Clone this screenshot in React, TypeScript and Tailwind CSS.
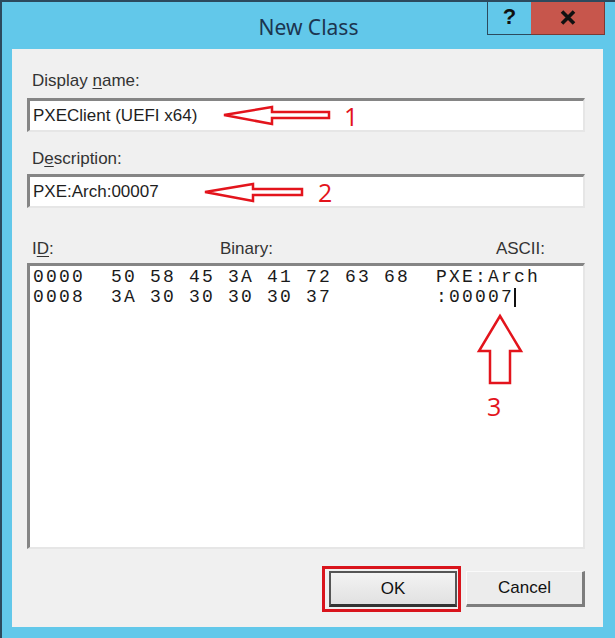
import React from "react";

const ui = { fontFamily: '"Liberation Sans", Arial, sans-serif' };
const caption = { fontFamily: '"Noto Sans", "Open Sans", sans-serif' };
const mono = { fontFamily: '"Liberation Mono", "Courier New", monospace' };
const note = { fontFamily: '"Open Sans", "Noto Sans", sans-serif' };

// underlined access key inside a label
const Key = ({ children }: { children: React.ReactNode }) => (
  <span className="underline underline-offset-2 decoration-1">{children}</span>
);

const Field = ({ value }: { value: string }) => (
  <div className="h-[34px] bg-white border-t-[3px] border-l-[3px] border-r-2 border-b-2 border-t-[#858585] border-l-[#858585] border-r-[#e6e6e6] border-b-[#e6e6e6] flex items-center pl-[3px] text-[17px] text-[#1e1e1e]">
    {value}
  </div>
);

const LeftArrow = ({ x, y, len }: { x: number; y: number; len: number }) => (
  <svg
    className="absolute"
    style={{ left: x, top: y }}
    width={len + 4}
    height={22}
    viewBox={`0 0 ${len + 4} 22`}
  >
    <polygon
      points={`2,10 50,2 50,7 ${len + 2},7 ${len + 2},13 50,13 50,19`}
      fill="none"
      stroke="#e3141c"
      strokeWidth="2.5"
      strokeLinejoin="miter"
    />
  </svg>
);

const rows = [
  "0000  50 58 45 3A 41 72 63 68  PXE:Arch",
  "0008  3A 30 30 30 30 37        :00007",
];

export default function App() {
  return (
    <div className="relative w-[615px] h-[638px] bg-[#62c8ea] border-l-2 border-t-2 border-[#2c4a5e] flex flex-col overflow-hidden">
      {/* caption */}
      <div className="h-[47px] flex items-center justify-center pt-[5px]">
        <span style={caption} className="text-[21px] text-[#1c3550]">
          New Class
        </span>
      </div>
      <div className="absolute top-[-2px] right-[10px] flex h-[35px]">
        <div className="w-[44px] border-l-[1.5px] border-b-[1.5px] border-[#2c4a5e] flex items-center justify-center">
          <span style={ui} className="text-[22px] font-bold text-[#111] leading-none">
            ?
          </span>
        </div>
        <div className="w-[74px] bg-[#c7564c] border-b-[1.5px] border-r-[1.5px] border-[#7a3a34] flex items-center justify-center">
          <svg width="16" height="15" viewBox="0 0 16 15">
            <path d="M2 1.5 L14 13.5 M14 1.5 L2 13.5" stroke="#111" strokeWidth="3.6" />
          </svg>
        </div>
      </div>

      {/* client area */}
      <div
        style={ui}
        className="ml-[10px] mr-[12px] mb-[11px] flex-1 bg-[#f0f0f0] flex flex-col pl-[15px] pr-[18px] pt-[22px] pb-[15px]"
      >
        <div className="pl-[5px] text-[17px] leading-[20px] text-[#333]">
          Display <Key>n</Key>ame:
        </div>
        <div className="mt-[7px]">
          <Field value="PXEClient (UEFI x64)" />
        </div>

        <div className="mt-[17px] pl-[5px] text-[17px] leading-[20px] text-[#333]">
          D<Key>e</Key>scription:
        </div>
        <div className="mt-[5px]">
          <Field value="PXE:Arch:00007" />
        </div>

        <div className="mt-[31px] pl-[5px] pr-[40px] flex text-[17px] leading-[20px] text-[#333]">
          <span className="w-[188px]">
            I<Key>D</Key>:
          </span>
          <span>Binary:</span>
          <span className="ml-auto">ASCII:</span>
        </div>
        <div className="mt-[4px] h-[286px] bg-white border-t-[3px] border-l-[3px] border-r-2 border-b-2 border-t-[#858585] border-l-[#858585] border-r-[#e6e6e6] border-b-[#e6e6e6] pl-[3px] pt-[1px]">
          {rows.map((r, i) => (
            <div
              key={r}
              style={mono}
              className="whitespace-pre text-[18px] tracking-[2.2px] leading-[20px] font-medium text-[#1a1a1a] flex items-center"
            >
              {r}
              {i === 1 && <span className="inline-block w-[1.5px] h-[19px] bg-[#111]" />}
            </div>
          ))}
        </div>

        <div className="mt-auto flex justify-end items-center gap-[5px]">
          <div className="border-[3px] border-[#d9141c] py-[2px] pl-[4px] pr-[1px]">
            <button className="w-[128px] h-[36px] bg-gradient-to-b from-[#f3f3f3] to-[#e1e1e1] border-2 border-[#555] border-b-[3px] border-b-[#333] text-[17px] text-[#111]">
              OK
            </button>
          </div>
          <button className="w-[119px] h-[36px] bg-[#ececec] border-t border-l border-[#fafafa] border-r-[3px] border-b-[3px] border-r-[#7d7d7d] border-b-[#7d7d7d] text-[17px] text-[#111]">
            Cancel
          </button>
        </div>
      </div>

      {/* callouts */}
      <LeftArrow x={220} y={103} len={105} />
      <span style={note} className="absolute left-[342px] top-[102px] text-[25px] leading-none text-[#e3141c]">
        1
      </span>
      <LeftArrow x={201} y={180} len={97} />
      <span style={note} className="absolute left-[316px] top-[178px] text-[25px] leading-none text-[#e3141c]">
        2
      </span>
      <svg className="absolute left-[474px] top-[311px]" width="50" height="76" viewBox="0 0 50 76">
        <polygon
          points="24,3 45,38 34,38 34,70 14,70 14,38 3,38"
          fill="none"
          stroke="#e3141c"
          strokeWidth="2.5"
        />
      </svg>
      <span style={note} className="absolute left-[485px] top-[392px] text-[25px] leading-none text-[#e3141c]">
        3
      </span>
    </div>
  );
}
